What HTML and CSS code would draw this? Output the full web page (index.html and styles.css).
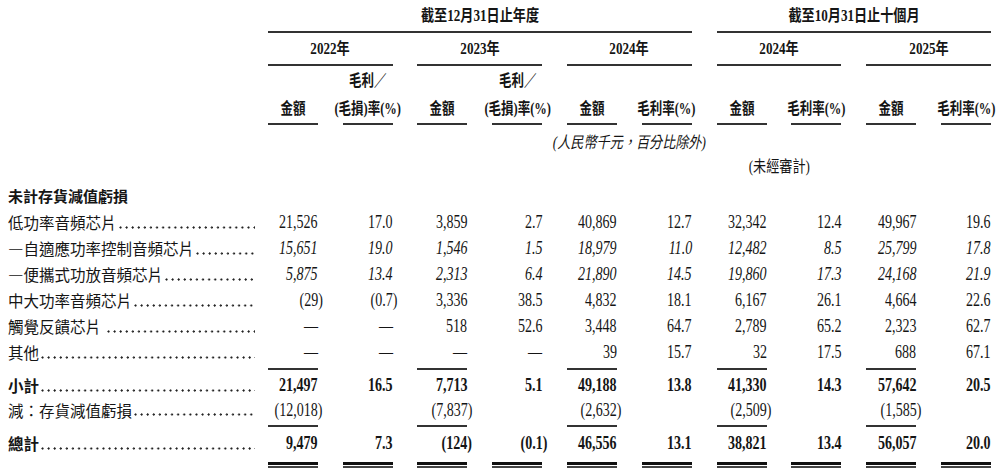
FILE: index.html
```html
<!DOCTYPE html>
<html lang="zh-Hant">
<head>
<meta charset="utf-8">
<title>存貨減值</title>
<link rel="stylesheet" href="styles.css">
</head>
<body>
<div class="sheet">
  <div class="row r-title">
    <div></div>
    <div class="grp g1"><span class="t">截至12月31日止年度</span></div>
    <div class="grp g2"><span class="t">截至10月31日止十個月</span></div>
  </div>
  <div class="row r-year">
    <div></div>
    <div class="grp yr"><span class="t">2022年</span></div>
    <div class="grp yr"><span class="t">2023年</span></div>
    <div class="grp yr"><span class="t">2024年</span></div>
    <div class="grp yr"><span class="t">2024年</span></div>
    <div class="grp yr"><span class="t">2025年</span></div>
  </div>
  <div class="row r-head">
    <div></div>
    <div class="hd"><span class="t">金額</span></div>
    <div class="hd"><span class="t">毛利／<br>(毛損)率(%)</span></div>
    <div class="hd"><span class="t">金額</span></div>
    <div class="hd"><span class="t">毛利／<br>(毛損)率(%)</span></div>
    <div class="hd"><span class="t">金額</span></div>
    <div class="hd"><span class="t">毛利率(%)</span></div>
    <div class="hd"><span class="t">金額</span></div>
    <div class="hd"><span class="t">毛利率(%)</span></div>
    <div class="hd"><span class="t">金額</span></div>
    <div class="hd"><span class="t">毛利率(%)</span></div>
  </div>
  <div class="row r-note">
    <div class="note"><span class="t">(人民幣千元，百分比除外)</span></div>
  </div>
  <div class="row r-note2">
    <div class="note"><span class="t">(未經審計)</span></div>
  </div>
  <div class="row r-sec">
    <div class="lab bdl">未計存貨減值虧損</div>
  </div>

  <div class="row">
    <div class="lab"><span class="lt">低功率音頻芯片</span><span class="dots"></span></div>
    <div class="c"><span class="n">21,526</span></div>
    <div class="c"><span class="n">17.0</span></div>
    <div class="c"><span class="n">3,859</span></div>
    <div class="c"><span class="n">2.7</span></div>
    <div class="c"><span class="n">40,869</span></div>
    <div class="c"><span class="n">12.7</span></div>
    <div class="c"><span class="n">32,342</span></div>
    <div class="c"><span class="n">12.4</span></div>
    <div class="c"><span class="n">49,967</span></div>
    <div class="c"><span class="n">19.6</span></div>
  </div>
  <div class="row it">
    <div class="lab"><span class="lt">—自適應功率控制音頻芯片</span><span class="dots"></span></div>
    <div class="c"><span class="n">15,651</span></div>
    <div class="c"><span class="n">19.0</span></div>
    <div class="c"><span class="n">1,546</span></div>
    <div class="c"><span class="n">1.5</span></div>
    <div class="c"><span class="n">18,979</span></div>
    <div class="c"><span class="n">11.0</span></div>
    <div class="c"><span class="n">12,482</span></div>
    <div class="c"><span class="n">8.5</span></div>
    <div class="c"><span class="n">25,799</span></div>
    <div class="c"><span class="n">17.8</span></div>
  </div>
  <div class="row it">
    <div class="lab"><span class="lt">—便攜式功放音頻芯片</span><span class="dots"></span></div>
    <div class="c"><span class="n">5,875</span></div>
    <div class="c"><span class="n">13.4</span></div>
    <div class="c"><span class="n">2,313</span></div>
    <div class="c"><span class="n">6.4</span></div>
    <div class="c"><span class="n">21,890</span></div>
    <div class="c"><span class="n">14.5</span></div>
    <div class="c"><span class="n">19,860</span></div>
    <div class="c"><span class="n">17.3</span></div>
    <div class="c"><span class="n">24,168</span></div>
    <div class="c"><span class="n">21.9</span></div>
  </div>
  <div class="row">
    <div class="lab"><span class="lt">中大功率音頻芯片</span><span class="dots"></span></div>
    <div class="c"><span class="n neg">(29)</span></div>
    <div class="c"><span class="n neg">(0.7)</span></div>
    <div class="c"><span class="n">3,336</span></div>
    <div class="c"><span class="n">38.5</span></div>
    <div class="c"><span class="n">4,832</span></div>
    <div class="c"><span class="n">18.1</span></div>
    <div class="c"><span class="n">6,167</span></div>
    <div class="c"><span class="n">26.1</span></div>
    <div class="c"><span class="n">4,664</span></div>
    <div class="c"><span class="n">22.6</span></div>
  </div>
  <div class="row">
    <div class="lab"><span class="lt">觸覺反饋芯片</span><span class="dots sp"></span></div>
    <div class="c"><span class="n">—</span></div>
    <div class="c"><span class="n">—</span></div>
    <div class="c"><span class="n">518</span></div>
    <div class="c"><span class="n">52.6</span></div>
    <div class="c"><span class="n">3,448</span></div>
    <div class="c"><span class="n">64.7</span></div>
    <div class="c"><span class="n">2,789</span></div>
    <div class="c"><span class="n">65.2</span></div>
    <div class="c"><span class="n">2,323</span></div>
    <div class="c"><span class="n">62.7</span></div>
  </div>
  <div class="row r-oth">
    <div class="lab"><span class="lt">其他</span><span class="dots"></span></div>
    <div class="c"><span class="n">—</span></div>
    <div class="c"><span class="n">—</span></div>
    <div class="c"><span class="n">—</span></div>
    <div class="c"><span class="n">—</span></div>
    <div class="c"><span class="n">39</span></div>
    <div class="c"><span class="n">15.7</span></div>
    <div class="c"><span class="n">32</span></div>
    <div class="c"><span class="n">17.5</span></div>
    <div class="c"><span class="n">688</span></div>
    <div class="c"><span class="n">67.1</span></div>
  </div>
  <div class="row r-sub bd">
    <div class="lab"><span class="lt">小計</span><span class="dots"></span></div>
    <div class="c ul"><span class="n">21,497</span></div>
    <div class="c"><span class="n">16.5</span></div>
    <div class="c ul"><span class="n">7,713</span></div>
    <div class="c"><span class="n">5.1</span></div>
    <div class="c ul"><span class="n">49,188</span></div>
    <div class="c"><span class="n">13.8</span></div>
    <div class="c ul"><span class="n">41,330</span></div>
    <div class="c"><span class="n">14.3</span></div>
    <div class="c ul"><span class="n">57,642</span></div>
    <div class="c"><span class="n">20.5</span></div>
  </div>
  <div class="row r-less">
    <div class="lab"><span class="lt">減：存貨減值虧損</span><span class="dots"></span></div>
    <div class="c"><span class="n neg">(12,018)</span></div>
    <div class="c"></div>
    <div class="c"><span class="n neg">(7,837)</span></div>
    <div class="c"></div>
    <div class="c"><span class="n neg">(2,632)</span></div>
    <div class="c"></div>
    <div class="c"><span class="n neg">(2,509)</span></div>
    <div class="c"></div>
    <div class="c"><span class="n neg">(1,585)</span></div>
    <div class="c"></div>
  </div>
  <div class="row r-total bd">
    <div class="lab"><span class="lt">總計</span><span class="dots"></span></div>
    <div class="c ul"><span class="n">9,479</span></div>
    <div class="c"><span class="n">7.3</span></div>
    <div class="c ul"><span class="n neg">(124)</span></div>
    <div class="c"><span class="n neg">(0.1)</span></div>
    <div class="c ul"><span class="n">46,556</span></div>
    <div class="c"><span class="n">13.1</span></div>
    <div class="c ul"><span class="n">38,821</span></div>
    <div class="c"><span class="n">13.4</span></div>
    <div class="c ul"><span class="n">56,057</span></div>
    <div class="c"><span class="n">20.0</span></div>
  </div>
</div>
</body>
</html>
```

FILE: styles.css
```css
* { box-sizing: border-box; margin: 0; padding: 0; }
html, body { background: #fff; }
body {
  color: #151515;
  font-family: "Liberation Serif", "Noto Sans CJK TC", serif;
}
.sheet { width: 1000px; padding: 0 8px; }
.row {
  display: grid;
  grid-template-columns: 235px repeat(10, 50px);
  column-gap: 24.8px;
}
.t {
  display: inline-block;
  white-space: nowrap;
  transform: scaleX(.82);
  transform-origin: center;
}
.grp {
  display: flex;
  justify-content: center;
  border-bottom: 2px solid #333;
  font-weight: bold;
  font-size: 16px;
  line-height: 20px;
  padding: 6px 0 5px;
}
.g1 { grid-column: span 6; }
.g2 { grid-column: span 4; }
.yr { grid-column: span 2; }

.hd {
  display: flex;
  justify-content: center;
  align-items: flex-end;
  border-bottom: 2px solid #333;
  font-size: 16px;
  font-weight: bold;
  line-height: 28px;
  padding-top: 1px;
  text-align: center;
}
.hd .t { transform: scaleX(.78); }
.note {
  display: flex;
  justify-content: center;
  font-style: italic;
  font-size: 16px;
  line-height: 20px;
}
.r-note .note { grid-column: 6 / 8; padding-top: 8px; }
.r-note2 .note { grid-column: 8 / 10; padding-top: 4px; font-style: normal; }
.r-sec { margin-top: 6px; }

.lab {
  display: flex;
  align-self: start;
  width: calc(100% + 12px);
  font-family: "Noto Sans CJK TC", sans-serif;
  font-size: 15.5px;
  line-height: 26px;
  white-space: nowrap;
}
.bdl { font-weight: bold; font-size: 15px; }
.lt { flex: none; }
.dots {
  flex: 1;
  min-width: 0;
  margin-left: 2px;
  background-image: radial-gradient(circle at 1.5px 1.5px, #222 0.9px, transparent 1.3px);
  background-size: 6.1px 3px;
  background-repeat: repeat-x;
  background-position: 0 calc(100% - 6px);
}
.dots.sp { margin-left: 6px; }
.c {
  display: flex;
  justify-content: flex-end;
  font-size: 18px;
  line-height: 26px;
}
.n {
  display: inline-block;
  white-space: nowrap;
  transform: scaleX(.78);
  transform-origin: right center;
}
.neg { margin-right: -5px; }
.it .n { font-style: italic; }
.bd .c, .bd .lt { font-weight: bold; }

.r-oth { padding-bottom: 3px; }
.r-sub .c { border-top: 2px solid transparent; padding-top: 2px; }
.r-sub .lab { padding-top: 4px; }
.r-sub .ul { border-top-color: #333; }

.r-less .c, .r-less .lab { line-height: 24px; }
.r-less { padding-bottom: 3px; }

.r-total .c {
  border-top: 2px solid transparent;
  padding-top: 3px;
  padding-bottom: 10px;
  border-bottom: 2px solid #444;
  background-image: linear-gradient(#111, #111);
  background-repeat: no-repeat;
  background-size: 100% 3px;
  background-position: left bottom 1px;
}
.r-total .lab { padding-top: 5px; }
.r-total .ul { border-top-color: #333; }
```
